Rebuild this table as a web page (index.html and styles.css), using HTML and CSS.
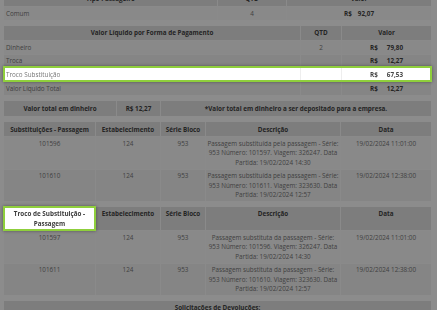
FILE: index.html
```html
<!DOCTYPE html>
<html lang="pt-BR">
<head>
<meta charset="utf-8">
<title>Resumo</title>
<link rel="stylesheet" href="styles.css">
</head>
<body>
<div class="page">
  <div class="tbl t1">
    <div class="row head"><div class="c">Tipo Passageiro</div><div class="c">QTD</div><div class="c">Valor</div></div>
    <div class="row"><div class="c left">Comum</div><div class="c">4</div><div class="c money"><b>R$</b><b class="amt">92,07</b></div></div>
  </div>

  <div class="tbl t2">
    <div class="row head"><div class="c">Valor Líquido por Forma de Pagamento</div><div class="c">QTD</div><div class="c">Valor</div></div>
    <div class="row"><div class="c left">Dinheiro</div><div class="c">2</div><div class="c money"><b>R$</b><b class="amt">79,80</b></div></div>
    <div class="row"><div class="c left">Troca</div><div class="c"></div><div class="c money"><b>R$</b><b class="amt">12,27</b></div></div>
    <div class="row hl"><div class="c left">Troco Substituição</div><div class="c"></div><div class="c money"><b>R$</b><b class="amt">67,53</b></div></div>
    <div class="row"><div class="c left">Valor Líquido Total</div><div class="c"></div><div class="c money"><b>R$</b><b class="amt">12,27</b></div></div>
  </div>

  <div class="tbl t3">
    <div class="row head tall"><div class="c">Valor total em dinheiro</div><div class="c">R$ 12,27</div><div class="c">*Valor total em dinheiro a ser depositado para a empresa.</div></div>
  </div>

  <div class="tbl t4">
    <div class="row head"><div class="c">Substituições - Passagem</div><div class="c">Estabelecimento</div><div class="c">Série Bloco</div><div class="c">Descrição</div><div class="c">Data</div></div>
    <div class="row"><div class="c">101596</div><div class="c">124</div><div class="c">953</div><div class="c desc">Passagem substituída pela passagem - Série: 953 Número: 101597. Viagem: 326247. Data Partida: 19/02/2024 14:30</div><div class="c">19/02/2024 11:01:00</div></div>
    <div class="row"><div class="c">101610</div><div class="c">124</div><div class="c">953</div><div class="c desc">Passagem substituída pela passagem - Série: 953 Número: 101611. Viagem: 323630. Data Partida: 19/02/2024 12:57</div><div class="c">19/02/2024 12:38:00</div></div>
  </div>

  <div class="tbl t4">
    <div class="row head"><div class="c hl">Troco de Substituição - Passagem</div><div class="c">Estabelecimento</div><div class="c">Série Bloco</div><div class="c">Descrição</div><div class="c">Data</div></div>
    <div class="row"><div class="c">101597</div><div class="c">124</div><div class="c">953</div><div class="c desc">Passagem substituta da passagem - Série: 953 Número: 101596. Viagem: 326247. Data Partida: 19/02/2024 14:30</div><div class="c">19/02/2024 11:01:00</div></div>
    <div class="row"><div class="c">101611</div><div class="c">124</div><div class="c">953</div><div class="c desc">Passagem substituta da passagem - Série: 953 Número: 101610. Viagem: 323630. Data Partida: 19/02/2024 12:57</div><div class="c">19/02/2024 12:38:00</div></div>
  </div>

  <div class="tbl t6">
    <div class="row head"><div class="c">Solicitações de Devoluções:</div></div>
    <div class="row"><div class="c">&nbsp;</div></div>
  </div>
</div>
<div class="backdrop"></div>
</body>
</html>
```
FILE: styles.css
```css
html, body {
  margin: 0;
  background: #fff;
}
body {
  font-family: "Open Sans", "DejaVu Sans", sans-serif;
  font-size: 6.3px;
  line-height: 9.3px;
  color: #777;
  overflow: hidden;
}
.page {
  margin-top: -8px;
  padding: 0 6px 0 4px;
  display: flex;
  flex-direction: column;
  gap: 6px;
}
.tbl {
  background: #f7f7f7;
}
.row {
  display: grid;
  border-top: 1px solid #fbfbfb;
}
.row:first-child { border-top: 0; }
.row:nth-child(odd) { background: #f2f2f2; }
.row:nth-child(even) { background: #f9f9f9; }
.t1 .row { grid-template-columns: 213px 69px 1fr; }
.t2 .row { grid-template-columns: 296px 41px 1fr; }
.t3 .row { grid-template-columns: 112px 44px 1fr; }
.t4 .row { grid-template-columns: 91px 65px 45px 135px 1fr; }
.t6 .row { grid-template-columns: 1fr; }

.c {
  padding: 1.7px 3px;
  text-align: center;
  border-left: 1px solid #fcfcfc;
}
.c:first-child { border-left: 0; }
.c.left { text-align: left; padding-left: 2px; }
.c.desc { padding-left: 1px; padding-right: 1px; }

.row.head {
  background: #e3e3e3;
  font-weight: 700;
  color: #444;
}
.row.head .c { padding: 2.4px 3px; }
.row.head.tall .c { padding: 3.3px 3px; }

.money b { color: #444; }
.t1 .amt { margin-left: 6px; }
.t2 .amt { margin-left: 9px; }

.backdrop {
  position: fixed;
  inset: 0;
  background: rgba(0, 0, 0, 0.45);
  z-index: 10;
}
.hl {
  position: relative;
  z-index: 11;
  background: #fff !important;
  outline: 2px solid #8fcf3c;
  outline-offset: -1px;
  box-shadow: 0 0 3px 1px rgba(20, 20, 20, 0.45);
}
.row.hl .c { border-left-color: #eeeeee; }
.c.hl { color: #3a3a3a; }
```
